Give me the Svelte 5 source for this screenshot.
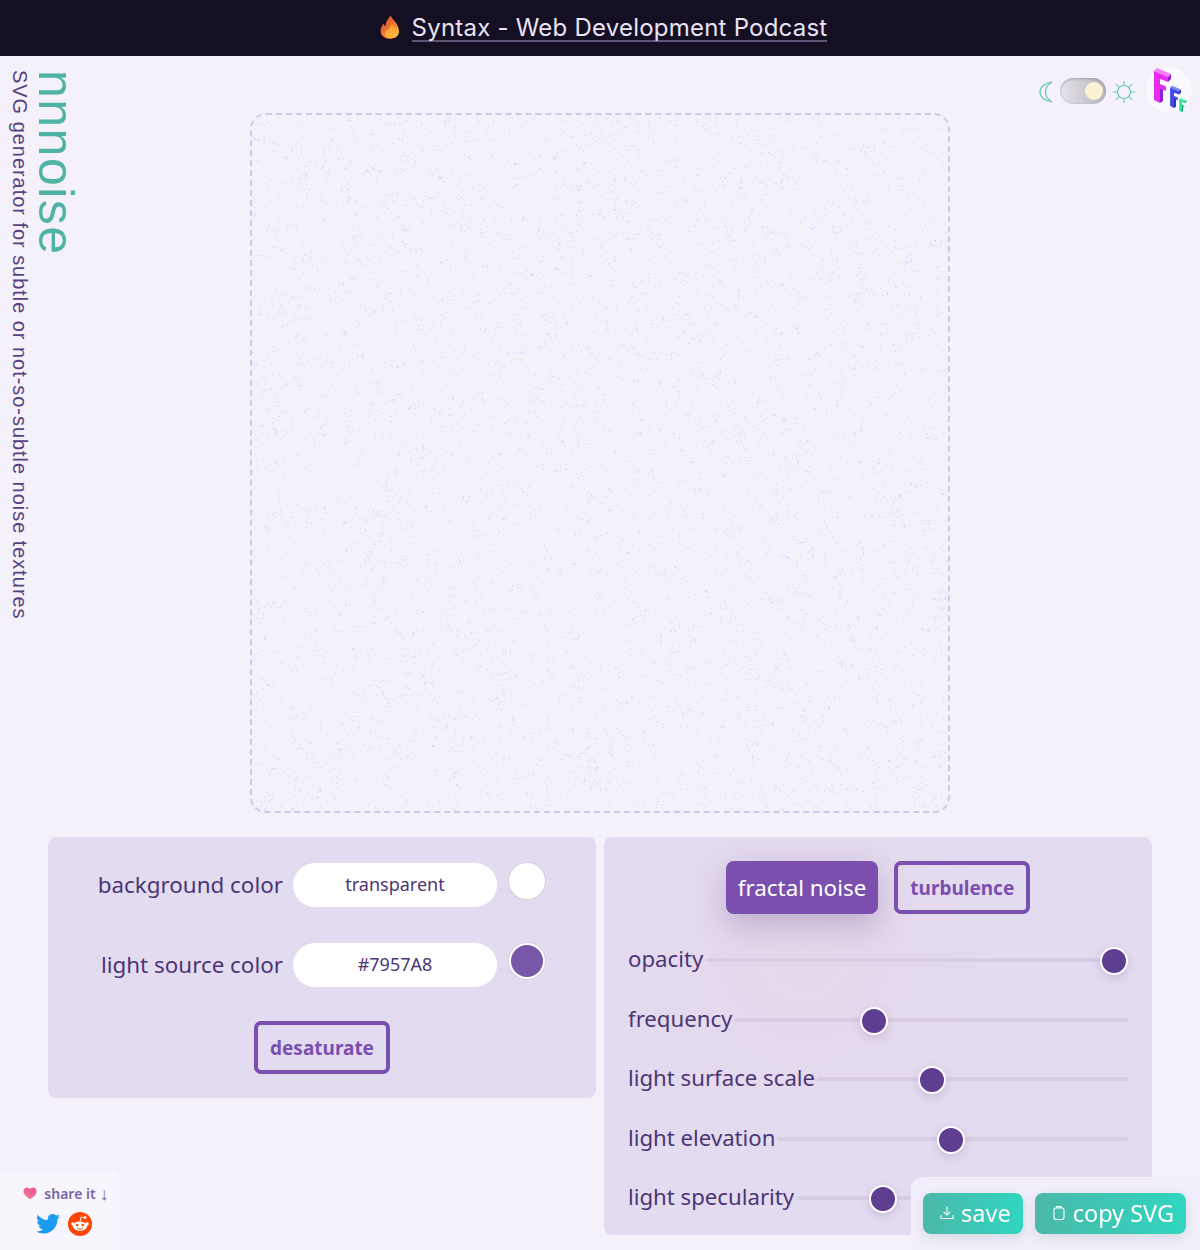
<script>
  const sliders = [
    { label: "opacity", value: 100 },
    { label: "frequency", value: 34.3 },
    { label: "light surface scale", value: 35.7 },
    { label: "light elevation", value: 49.6 },
    { label: "light specularity", value: 24 }
  ];

  // the three 3d letters of the logo
  const logoLetters = [
    { move: "translate(0 0)", top: "#f77bf5", face: "#e52df0", side: "#8f1fd0" },
    { move: "translate(19 18) scale(0.64)", top: "#7b86f7", face: "#3d49e8", side: "#1f2ab0" },
    { move: "translate(30 30) scale(0.42)", top: "#8af5c8", face: "#2fdc9a", side: "#12a070" }
  ];
</script>

<div class="banner">
  <svg class="flame" width="20" height="24" viewBox="0 0 20 24">
    <defs>
      <linearGradient id="flame-fill" x1="0.1" y1="0.1" x2="0.8" y2="1">
        <stop offset="0" stop-color="#d2482c" />
        <stop offset="0.55" stop-color="#f47a30" />
        <stop offset="1" stop-color="#ffc53d" />
      </linearGradient>
    </defs>
    <path d="M11 0.5C11.5 4 15 5.5 17 9.5C19 13.5 19.5 16 18.5 19C17.5 22 14.5 23.5 10 23.5C5 23.5 1.8 21.5 0.8 18C0 14.5 1.5 11 3.5 8.5C4 10 4.5 10.5 5.5 11C5.5 7 8 3.5 11 0.5Z" fill="url(#flame-fill)" />
    <path d="M12 9C13 11.5 16.5 13.5 16.5 17.5C16.5 21 13.5 23.5 10.5 23.5C7.5 23.5 5 21.5 5 18.5C5 15.5 8 15 9.5 13C10.5 11.5 11.5 10.5 12 9Z" fill="#ffb43a" opacity="0.75" />
  </svg>
  <a class="banner-link" href="#top">Syntax - Web Development Podcast</a>
</div>

<main class="page">
  <div class="top">
    <header class="side-title">
      <h1>nnnoise</h1>
      <p>SVG generator for subtle or not-so-subtle noise textures</p>
    </header>

    <div class="canvas">
      <svg width="100%" height="100%" xmlns="http://www.w3.org/2000/svg">
        <defs>
          <filter id="nnnoise-filter" x="0" y="0" width="100%" height="100%" color-interpolation-filters="sRGB">
            <feTurbulence type="fractalNoise" baseFrequency="0.102" numOctaves="4" seed="15" stitchTiles="stitch" result="turbulence" />
            <feSpecularLighting surfaceScale="15" specularConstant="0.75" specularExponent="20" lighting-color="#6a5ee0" in="turbulence" result="specularLighting">
              <feDistantLight azimuth="3" elevation="100" />
            </feSpecularLighting>
            <feGaussianBlur stdDeviation="0.4" />
          </filter>
        </defs>
        <rect width="100%" height="100%" filter="url(#nnnoise-filter)" opacity="0.3" />
      </svg>
    </div>

    <div class="tools">
      <svg class="moon" width="16" height="24" viewBox="0 0 16 24" fill="none" stroke="#6cc4b6" stroke-width="1.2">
        <path d="M14 2C7 3 2 7 2 12C2 17 7 21 14 22C10 19.5 7.5 16 7.5 12C7.5 8 10 4.5 14 2Z" />
      </svg>
      <div class="switch"><span class="knob"></span></div>
      <svg class="sun" width="24" height="24" viewBox="0 0 24 24" fill="none" stroke="#6cc4b6" stroke-width="1.2" stroke-linecap="round">
        <circle cx="12" cy="12" r="6.5" />
        <path d="M12 1.5V4.5M12 19.5V22.5M1.5 12H4.5M19.5 12H22.5M4.6 4.6L6.8 6.8M17.2 17.2L19.4 19.4M4.6 19.4L6.8 17.2M17.2 6.8L19.4 4.6" />
      </svg>
      <div class="logo">
        <svg width="46" height="46" viewBox="0 0 46 46">
          {#each logoLetters as letter}
            <g transform={letter.move}>
              <path d="M8 4L11 1L25 7L22 10Z" fill={letter.top} />
              <path d="M22 10L25 7V12L22 15ZM14 21.5L17 20V34L14 36Z" fill={letter.side} />
              <path d="M8 4L22 10V15L14 12V17L20 19.5V24L14 21.5V36L8 33Z" fill={letter.face} />
            </g>
          {/each}
        </svg>
      </div>
    </div>
  </div>

  <div class="panels">
    <section class="panel color-panel">
      <div class="color-row">
        <label for="bg-color">background color</label>
        <input id="bg-color" class="color-text" value="transparent" />
        <span class="swatch swatch-white"></span>
      </div>
      <div class="color-row">
        <label for="light-color">light source color</label>
        <input id="light-color" class="color-text" value="#7957A8" />
        <span class="swatch swatch-purple"></span>
      </div>
      <button class="btn-outline desaturate">desaturate</button>
    </section>

    <section class="panel slider-panel">
      <div class="type-row">
        <button class="btn-solid">fractal noise</button>
        <button class="btn-outline">turbulence</button>
      </div>
      {#each sliders as slider}
        <div class="slider-row">
          <span>{slider.label}</span>
          <input type="range" min="0" max="100" step="0.1" value={slider.value} aria-label={slider.label} />
        </div>
      {/each}
    </section>
  </div>
</main>

<aside class="share">
  <div class="share-title">
    <svg width="14" height="13" viewBox="0 0 14 13">
      <defs>
        <linearGradient id="heart-fill" x1="0" y1="1" x2="1" y2="0">
          <stop offset="0" stop-color="#f9b27a" />
          <stop offset="0.4" stop-color="#ee6a94" />
          <stop offset="1" stop-color="#e8558c" />
        </linearGradient>
      </defs>
      <path d="M7 12.5C3 9.5 0.5 7.5 0.5 4.3C0.5 2 2.2 0.5 4 0.5C5.3 0.5 6.4 1.2 7 2.3C7.6 1.2 8.7 0.5 10 0.5C11.8 0.5 13.5 2 13.5 4.3C13.5 7.5 11 9.5 7 12.5Z" fill="url(#heart-fill)" />
    </svg>
    <span>share it</span><span class="arrow">↓</span>
  </div>
  <div class="share-icons">
    <svg width="24" height="20" viewBox="0 0 24 20">
      <path d="M24 2.4C23.1 2.8 22.2 3.1 21.2 3.2C22.2 2.6 23 1.6 23.4 0.4C22.4 1 21.3 1.4 20.2 1.6C19.3 0.6 18 0 16.6 0C13.9 0 11.7 2.2 11.7 4.9C11.7 5.3 11.7 5.7 11.8 6C7.7 5.8 4.1 3.9 1.7 0.9C1.3 1.6 1 2.5 1 3.4C1 5.1 1.9 6.6 3.2 7.5C2.4 7.5 1.6 7.2 1 6.9V7C1 9.4 2.7 11.4 4.9 11.8C4.5 11.9 4.1 12 3.6 12C3.3 12 3 12 2.7 11.9C3.3 13.9 5.2 15.3 7.3 15.3C5.6 16.6 3.5 17.4 1.2 17.4C0.8 17.4 0.4 17.4 0 17.3C2.2 18.7 4.8 19.5 7.5 19.5C16.6 19.5 21.5 12 21.5 5.5V4.9C22.5 4.2 23.3 3.4 24 2.4Z" fill="#1d9bf0" />
    </svg>
    <svg width="24" height="24" viewBox="0 0 24 24">
      <circle cx="12" cy="12" r="12" fill="#ff4500" />
      <ellipse cx="12" cy="14.2" rx="7" ry="4.8" fill="#fff" />
      <circle cx="5" cy="12" r="1.7" fill="#fff" />
      <circle cx="19" cy="12" r="1.7" fill="#fff" />
      <path d="M12 9.5L13 5L16.5 5.8" fill="none" stroke="#fff" stroke-width="0.9" />
      <circle cx="17" cy="5.6" r="1.4" fill="#fff" />
      <circle cx="9.2" cy="13" r="1.3" fill="#ff4500" />
      <circle cx="14.8" cy="13" r="1.3" fill="#ff4500" />
      <path d="M9 16.2C10.5 17.4 13.5 17.4 15 16.2" fill="none" stroke="#ff4500" stroke-width="0.9" />
    </svg>
  </div>
</aside>

<div class="actions">
  <button class="btn-teal">
    <svg width="16" height="16" viewBox="0 0 16 16" fill="none" stroke="#fff" stroke-width="1.1" stroke-linecap="round" stroke-linejoin="round">
      <path d="M8 2V10M5 7.2L8 10.2L11 7.2M2 10.5V13.5H14V10.5" />
    </svg>
    save
  </button>
  <button class="btn-teal">
    <svg width="16" height="16" viewBox="0 0 16 16" fill="none" stroke="#fff" stroke-width="1.1" stroke-linejoin="round">
      <rect x="3" y="3" width="10" height="11.5" rx="2" />
      <path d="M5.8 3V1.6H10.2V3" />
    </svg>
    copy SVG
  </button>
</div>

<style>
  :global(body) {
    background: #f4f1fa;
    font-family: "Noto Sans", "Open Sans", sans-serif;
    color: #4c3575;
  }

  .banner {
    height: 56px;
    padding-left: 7px;
    background: #150f24;
    display: flex;
    align-items: center;
    justify-content: center;
    gap: 12px;
  }

  .flame {
    margin-top: -2px;
  }

  .banner-link {
    color: #e9e3f5;
    font-family: Inter, sans-serif;
    font-size: 24px;
    letter-spacing: 0.22px;
    text-decoration: none;
    border-bottom: 2px solid #5f5675;
    line-height: 24px;
    margin-top: 2px;
  }

  .page {
    padding: 0 48px;
  }

  .top {
    margin: 0 -48px;
    display: grid;
    grid-template-columns: 1fr 700px 1fr;
    padding-top: 14px;
    height: 743px;
    box-sizing: border-box;
  }

  .side-title {
    writing-mode: vertical-rl;
    justify-self: start;
    padding-left: 10px;
    height: 600px;
    font-family: "Liberation Sans", sans-serif;
  }

  .side-title h1 {
    margin: 0;
    font-weight: 400;
    font-size: 50px;
    letter-spacing: 1.5px;
    line-height: 51px;
    color: #4eb3a4;
  }

  .side-title p {
    margin: 0;
    font-size: 20px;
    letter-spacing: 0.96px;
    line-height: 20px;
    color: #57417f;
    white-space: nowrap;
  }

  .canvas {
    width: 700px;
    height: 700px;
    margin-top: 43px;
    box-sizing: border-box;
    border: 2px dashed #cfc8e6;
    border-radius: 16px;
    overflow: hidden;
  }

  .canvas svg {
    display: block;
  }

  .tools {
    justify-self: end;
    display: flex;
    align-items: flex-start;
    height: 50px;
    padding-right: 8px;
  }

  .moon {
    margin: 10px 6px 0 0;
  }

  .sun {
    margin-top: 10px;
  }

  .switch {
    width: 46px;
    height: 26px;
    margin: 8px 6px 0 0;
    border-radius: 13px;
    background: linear-gradient(90deg, #e6e3ec, #b8b5bd);
    box-shadow: inset 0 1px 3px rgba(60, 50, 80, 0.3);
    display: flex;
    align-items: center;
    justify-content: flex-end;
    padding: 0 3px;
    box-sizing: border-box;
  }

  .knob {
    width: 18px;
    height: 18px;
    border-radius: 50%;
    background: #fbf2d3;
  }

  .logo {
    width: 46px;
    height: 46px;
    margin: -3px 0 0 10px;
    border-radius: 50%;
    background: #fbf9fe;
  }

  .panels {
    margin-top: 38px;
    display: grid;
    grid-template-columns: 548px 548px;
    gap: 8px;
    align-items: start;
  }

  .panel {
    background: #e3dbf0;
    border-radius: 8px;
    box-sizing: border-box;
  }

  .color-panel {
    height: 261px;
    padding-top: 26px;
    display: flex;
    flex-direction: column;
  }

  .color-row {
    display: flex;
    align-items: center;
    justify-content: flex-end;
    gap: 10px;
    height: 44px;
    margin-bottom: 36px;
    padding-right: 47px;
    font-size: 22.4px;
  }

  .color-row label {
    margin-top: -2px;
  }

  .color-text {
    width: 204px;
    height: 44px;
    box-sizing: border-box;
    border: none;
    border-radius: 22px;
    background: #fff;
    font-family: inherit;
    font-size: 18px;
    color: #4c3575;
    text-align: center;
    padding-bottom: 3px;
  }

  .swatch {
    width: 32px;
    height: 32px;
    border-radius: 50%;
    border: 2px solid #fff;
    box-shadow: 0 0 0 1px #d5d0dc;
    margin: -8px 4px 0 2px;
  }

  .swatch-white {
    background: #fff;
  }

  .swatch-purple {
    background: #7957a8;
  }

  button {
    font-family: inherit;
    cursor: pointer;
  }

  .btn-outline {
    height: 53px;
    padding: 0 12px;
    box-sizing: border-box;
    background: transparent;
    border: 4px solid #7a4fae;
    border-radius: 7px;
    color: #7a4fae;
    font-size: 19px;
    font-weight: 700;
  }

  .desaturate {
    align-self: center;
    margin-top: -2px;
  }

  .btn-solid {
    height: 53px;
    padding: 0 12px;
    border: none;
    border-radius: 8px;
    background: #7a4fae;
    color: #fff;
    font-size: 22.4px;
    box-shadow: 0 12px 30px rgba(90, 60, 130, 0.28);
  }

  .slider-panel {
    height: 398px;
    padding: 24px 24px 0;
    background: radial-gradient(circle at 200px 120px, #e5d8ea 0, #e3dbf0 200px);
  }

  .type-row {
    display: flex;
    justify-content: center;
    gap: 16px;
    margin-bottom: 16.5px;
  }

  .slider-row {
    display: flex;
    align-items: center;
    height: 59.5px;
    font-size: 22.2px;
    white-space: nowrap;
  }

  .slider-row span {
    margin-bottom: 3px;
  }

  input[type="range"] {
    appearance: none;
    flex: 1;
    min-width: 0;
    height: 28px;
    margin: 0 0 0 2px;
    background: transparent;
  }

  input[type="range"]::-webkit-slider-runnable-track {
    height: 4px;
    background: #d9cde6;
    border-radius: 2px;
  }

  input[type="range"]::-webkit-slider-thumb {
    appearance: none;
    width: 28px;
    height: 28px;
    margin-top: -11px;
    box-sizing: border-box;
    border: 2px solid #fff;
    border-radius: 50%;
    background: #5f3d91;
    box-shadow: 0 3px 8px rgba(90, 60, 130, 0.18);
  }

  .share {
    position: fixed;
    left: 0;
    bottom: 0;
    width: 120px;
    height: 79px;
    box-sizing: border-box;
    padding-top: 12px;
    background: #f8f5fd;
    border-top-right-radius: 10px;
  }

  .share-title {
    display: flex;
    align-items: center;
    justify-content: center;
    gap: 7px;
    padding-left: 12px;
    height: 20px;
    color: #77689f;
    font-size: 14px;
    font-weight: 600;
  }

  .arrow {
    margin-left: -3px;
    font-size: 18px;
    font-weight: 400;
  }

  .share-icons {
    display: flex;
    align-items: center;
    justify-content: center;
    gap: 8px;
    margin-top: 9px;
    padding-left: 8px;
  }

  .actions {
    position: fixed;
    right: 0;
    bottom: 0;
    width: 289px;
    height: 73px;
    box-sizing: border-box;
    padding: 16px 12px 0;
    display: flex;
    gap: 12px;
    background: #f3effa;
    border-top-left-radius: 12px;
  }

  .btn-teal {
    height: 41px;
    padding: 0 12px 2px 16px;
    display: flex;
    align-items: center;
    gap: 6px;
    border: none;
    border-radius: 8px;
    background: linear-gradient(90deg, #4bb8a9, #2fd6c0);
    color: #fff;
    font-size: 23.5px;
    box-shadow: 0 4px 12px rgba(60, 120, 120, 0.18);
    white-space: nowrap;
  }
</style>
